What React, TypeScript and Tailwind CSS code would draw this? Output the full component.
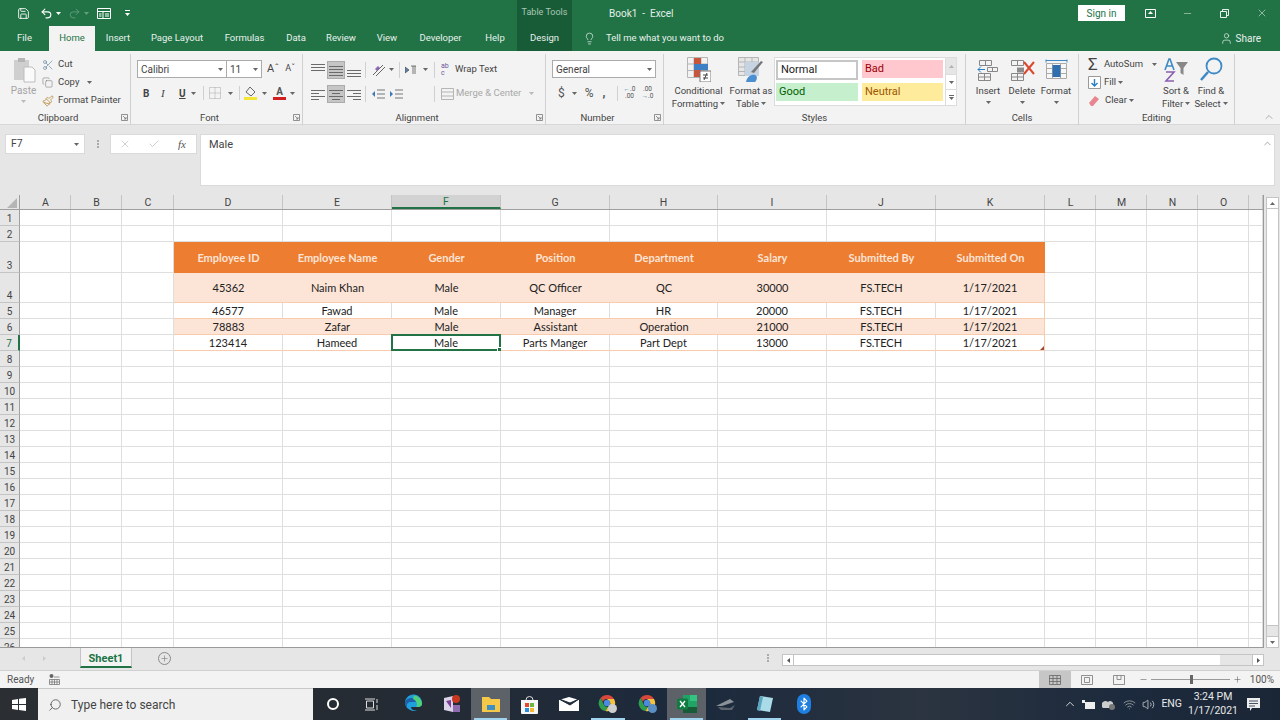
import React from "react";
import {
  Save, Undo2, Redo2, Scissors, Copy, Paintbrush, Lightbulb, User, Minus, X, Check, Search, ChevronUp, Plus, Volume2, Wifi, Bluetooth,
} from "lucide-react";

const COLS = ["A", "B", "C", "D", "E", "F", "G", "H", "I", "J", "K", "L", "M", "N", "O", ""];

const TABS = [
  { label: "File", w: "w-[49px]" },
  { label: "Home", w: "w-[46px]" },
  { label: "Insert", w: "w-[46px]" },
  { label: "Page Layout", w: "w-[72px]" },
  { label: "Formulas", w: "w-[63px]" },
  { label: "Data", w: "w-[40px]" },
  { label: "Review", w: "w-[50px]" },
  { label: "View", w: "w-[42px]" },
  { label: "Developer", w: "w-[65px]" },
  { label: "Help", w: "w-[44px]" },
  { label: "Design", w: "w-[55px]" },
];

const TABLE: Record<number, string[]> = {
  3: ["Employee ID", "Employee Name", "Gender", "Position", "Department", "Salary", "Submitted By", "Submitted On"],
  4: ["45362", "Naim Khan", "Male", "QC Officer", "QC", "30000", "FS.TECH", "1/17/2021"],
  5: ["46577", "Fawad", "Male", "Manager", "HR", "20000", "FS.TECH", "1/17/2021"],
  6: ["78883", "Zafar", "Male", "Assistant", "Operation", "21000", "FS.TECH", "1/17/2021"],
  7: ["123414", "Hameed", "Male", "Parts Manger", "Part Dept", "13000", "FS.TECH", "1/17/2021"],
};

const rowHeight = (r: number) => (r === 3 ? "h-[31px]" : r === 4 ? "h-[30px]" : "h-[16px]");

const colWidth = (i: number) =>
  i < 2 ? "w-[51px]" : i === 2 ? "w-[52px]" : i === 7 ? "w-[108px]" : i < 11 ? "w-[109px]" : i < 15 ? "w-[51px]" : "w-[14px]";

const Caret = ({ className = "" }: { className?: string }) => (
  <svg width="5" height="3" viewBox="0 0 5 3" className={className}>
    <path d="M0 0h5L2.5 3z" fill="#666" />
  </svg>
);

const Lines = ({ kind }: { kind: "top" | "mid" | "bot" | "left" | "center" | "right" }) => {
  const y = kind === "top" ? [2, 5, 8] : kind === "bot" ? [8, 11, 14] : [4, 7, 10, 13];
  const short = (i: number) => (i % 2 === 1 ? 8 : 14);
  return (
    <svg width="16" height="16" viewBox="0 0 16 16">
      {y.map((v, i) => {
        const w = kind === "center" || kind === "left" || kind === "right" ? short(i) : 14;
        const x = kind === "left" ? 1 : kind === "right" ? 15 - w : 8 - w / 2;
        return <rect key={v} x={x} y={v} width={w} height="1" fill="#6a6a6a" />;
      })}
    </svg>
  );
};

const Group = ({ label, w, launcher = true, children }: { label: string; w: string; launcher?: boolean; children: React.ReactNode }) => (
  <div className={`${w} shrink-0 flex flex-col h-[71px] border-r border-[#d0d0d0]`}>
    <div className="flex-1 flex min-h-0">{children}</div>
    <div className={`h-[15px] pt-[2px] relative flex items-center justify-center text-[9.5px] text-[#444] ${launcher ? "pr-[14px]" : ""}`}>
      {label}
      {launcher && (
        <svg width="7" height="7" viewBox="0 0 7 7" className="absolute right-[2px] top-[4px]">
          <path d="M.5 .5h6v6h-6zM2 2l3 3M5 3v2H3" fill="none" stroke="#777" strokeWidth=".8" />
        </svg>
      )}
    </div>
  </div>
);

const TitleBar = () => (
  <div className="h-[26px] flex items-center text-white">
    <div className="w-[517px] flex items-center pl-[17px] shrink-0">
      <Save size={13} strokeWidth={1.6} />
      <Undo2 size={13} strokeWidth={2} className="ml-[10px]" />
      <Caret className="ml-[3px] [&>path]:fill-white" />
      <Redo2 size={13} strokeWidth={1.6} className="ml-[7px] opacity-30" />
      <Caret className="ml-[3px] opacity-30 [&>path]:fill-white" />
      <svg width="14" height="11" viewBox="0 0 14 11" className="ml-[8px]">
        <path d="M.5 .5h13v10H.5zM.5 3.5h13M6 3.5v7M2 6h2.500M2 8h2.500M8 6h4M8 8h4" fill="none" stroke="#fff" />
      </svg>
      <svg width="5" height="6" viewBox="0 0 5 6" className="ml-[14px]">
        <path d="M0 0h5v1H0zM0 3h5L2.500 6z" fill="#fff" />
      </svg>
    </div>
    <div className="w-[55px] h-full bg-[#185c37] flex items-center justify-center text-[9px] text-[#a9c7b6] shrink-0">Table Tools</div>
    <div className="ml-[37px] text-[10px] text-[#e4efe9] whitespace-pre">Book1  -  Excel</div>
    <div className="ml-auto flex items-center h-full">
      <div className="w-[47px] h-[16px] bg-white text-[#217346] text-[10px] flex items-center justify-center">Sign in</div>
      <svg width="11" height="9" viewBox="0 0 11 9" className="ml-[20px]">
        <path d="M.5 .5h10v8H.5z" fill="none" stroke="#fff" />
        <path d="M5.500 2l2.500 3H3z" fill="#fff" />
      </svg>
      <Minus size={11} strokeWidth={1} className="ml-[26px]" />
      <svg width="9" height="9" viewBox="0 0 9 9" className="ml-[27px]">
        <path d="M.5 2.500h6v6h-6zM2.500 2.500v-2h6v6h-2" fill="none" stroke="#fff" strokeWidth=".9" />
      </svg>
      <X size={12} strokeWidth={1} className="ml-[27px] mr-[12px]" />
    </div>
  </div>
);

const TabRow = () => (
  <div className="h-[25px] flex items-stretch text-[9.5px] text-[#e8f1ec]">
    {TABS.map((t) => (
      <div
        key={t.label}
        className={`${t.w} shrink-0 flex items-center justify-center ${t.label === "Home" ? "bg-[#f3f3f3] text-[#217346]" : ""} ${t.label === "Design" ? "bg-[#185c37]" : ""}`}
      >
        {t.label}
      </div>
    ))}
    <div className="flex items-center ml-[11px]">
      <Lightbulb size={13} strokeWidth={1.3} />
      <span className="ml-[10px]">Tell me what you want to do</span>
    </div>
    <div className="ml-auto flex items-center mr-[19px]">
      <User size={13} strokeWidth={1.3} />
      <span className="ml-[3px] text-[10px]">Share</span>
    </div>
  </div>
);

const ClipboardGroup = () => (
  <Group label="Clipboard" w="w-[131px]">
    <div className="w-[42px] pl-[5px] flex flex-col items-center pt-[3px] text-[#a5a5a5] text-[10px]">
      <svg width="24" height="26" viewBox="0 0 24 26">
        <path d="M2 3h15v20H2z" fill="#cfcfcf" />
        <path d="M6 1h7v4H6z" fill="#b5b5b5" />
        <path d="M12 10h8l3 3v12H12z" fill="#fafafa" stroke="#bdbdbd" />
      </svg>
      <span>Paste</span>
      <Caret className="mt-[2px] opacity-40" />
    </div>
    <div className="flex flex-col pt-[3px] text-[9.5px] text-[#444] gap-[3px]">
      <div className="h-[15px] flex items-center"><Scissors size={12} strokeWidth={1.2} className="text-[#5a7a96]" /><span className="ml-[4px]">Cut</span></div>
      <div className="h-[15px] flex items-center"><Copy size={11} strokeWidth={1.2} className="text-[#777]" /><span className="ml-[5px]">Copy</span><Caret className="ml-[8px]" /></div>
      <div className="h-[15px] flex items-center"><Paintbrush size={12} strokeWidth={1.6} className="text-[#b58a3c]" /><span className="ml-[4px]">Format Painter</span></div>
    </div>
  </Group>
);

const FontGroup = () => (
  <Group label="Font" w="w-[172px]">
    <div className="flex flex-col pl-[6px] pt-[6px]">
      <div className="h-[18px] flex items-center">
        <div className="w-[90px] h-full bg-white border border-[#ababab] flex items-center justify-between px-[3px] text-[10px] text-[#444]">Calibri<Caret /></div>
        <div className="w-[35px] h-full bg-white border border-l-0 border-[#ababab] flex items-center justify-between px-[3px] text-[10px] text-[#444]">11<Caret /></div>
        <span className="ml-[5px] text-[11px] text-[#444]">Aˆ</span>
        <span className="ml-[6px] text-[9px] text-[#444]">Aˇ</span>
      </div>
      <div className="h-[18px] mt-[6px] flex items-center text-[10px] text-[#444]">
        <span className="ml-[6px] w-[18px] font-bold">B</span>
        <span className="w-[18px] italic font-['Liberation_Serif',serif] text-[11px]">I</span>
        <span className="w-[12px] underline font-bold">U</span>
        <Caret />
        <div className="w-px h-[14px] bg-[#d0d0d0] ml-[7px]" />
        <svg width="12" height="12" viewBox="0 0 12 12" className="ml-[5px]">
          <path d="M.5 .5h11v11H.5zM6 .5v11M.5 6h11" fill="none" stroke="#a8a8a8" strokeDasharray="1 1" />
        </svg>
        <Caret className="ml-[7px]" />
        <div className="w-px h-[14px] bg-[#d0d0d0] ml-[6px]" />
        <svg width="14" height="14" viewBox="0 0 14 14" className="ml-[4px]">
          <path d="M6 1l5 5-4 4-5-4z" fill="none" stroke="#666" />
          <path d="M0 11h13v3H0z" fill="#f3e635" />
        </svg>
        <Caret className="ml-[4px]" />
        <div className="ml-[6px] flex flex-col items-center w-[13px] leading-[11px] font-bold text-[#555]">A<div className="w-[13px] h-[3px] bg-[#d31f1f]" /></div>
        <Caret className="ml-[4px]" />
      </div>
    </div>
  </Group>
);

const AlignmentGroup = () => (
  <Group label="Alignment" w="w-[243px]">
    <div className="flex flex-col pl-[6px] pt-[5px] text-[9.5px]">
      <div className="h-[21px] flex items-center">
        <div className="w-[18px] flex justify-center"><Lines kind="top" /></div>
        <div className="w-[18px] h-[18px] bg-[#c6c6c6] border border-[#ababab] flex items-center justify-center"><Lines kind="mid" /></div>
        <div className="w-[18px] flex justify-center"><Lines kind="bot" /></div>
        <div className="w-px h-[16px] bg-[#d0d0d0] ml-[2px]" />
        <svg width="14" height="14" viewBox="0 0 14 14" className="ml-[6px]">
          <path d="M1 12L11 2M4 13l9-9" stroke="#666" fill="none" />
          <path d="M3 6l3-3 2 2-3 3z" fill="#8a6bb0" />
        </svg>
        <Caret className="ml-[3px]" />
        <div className="w-px h-[16px] bg-[#d0d0d0] ml-[5px]" />
        <svg width="12" height="10" viewBox="0 0 12 10" className="ml-[5px]">
          <path d="M0 2l4 3-4 3zM6 1h5M8 1v8M10 1v8" fill="#5a7fb0" stroke="#555" strokeWidth=".8" />
        </svg>
        <Caret className="ml-[6px]" />
        <div className="w-px h-[16px] bg-[#d0d0d0] ml-[6px]" />
        <div className="ml-[6px] flex items-center text-[#444]">
          <span className="text-[7px] leading-[7px] w-[10px] text-[#6a5aa0]">ab c</span>
          <span className="ml-[4px]">Wrap Text</span>
        </div>
      </div>
      <div className="h-[21px] mt-[3px] flex items-center">
        <div className="w-[18px] flex justify-center"><Lines kind="left" /></div>
        <div className="w-[18px] h-[18px] bg-[#c6c6c6] border border-[#ababab] flex items-center justify-center"><Lines kind="center" /></div>
        <div className="w-[18px] flex justify-center"><Lines kind="right" /></div>
        <div className="w-px h-[16px] bg-[#d0d0d0] ml-[2px]" />
        <svg width="13" height="10" viewBox="0 0 13 10" className="ml-[6px]">
          <path d="M5 1h8M5 5h8M5 9h8" stroke="#777" />
          <path d="M0 5l3-3v6z" fill="#3d78b8" />
        </svg>
        <svg width="13" height="10" viewBox="0 0 13 10" className="ml-[5px]">
          <path d="M5 1h8M5 5h8M5 9h8" stroke="#777" />
          <path d="M3 5L0 2v6z" fill="#3d78b8" />
        </svg>
        <div className="w-px h-[16px] bg-[#d0d0d0] ml-[31px]" />
        <div className="ml-[6px] flex items-center text-[#a8a8a8]">
          <svg width="13" height="12" viewBox="0 0 13 12">
            <path d="M.5 .5h12v11H.5zM.5 4h12M.5 8h12" fill="none" stroke="#b5b5b5" />
          </svg>
          <span className="ml-[2px]">Merge &amp; Center</span>
          <Caret className="ml-[8px] opacity-40" />
        </div>
      </div>
    </div>
  </Group>
);

const NumberGroup = () => (
  <Group label="Number" w="w-[118px]">
    <div className="flex flex-col pl-[6px] pt-[6px]">
      <div className="w-[104px] h-[18px] bg-white border border-[#ababab] flex items-center justify-between px-[3px] text-[10px] text-[#444]">General<Caret /></div>
      <div className="h-[18px] mt-[6px] flex items-center text-[12px] text-[#555]">
        <span className="ml-[6px]">$</span>
        <Caret className="ml-[7px]" />
        <span className="ml-[8px]">%</span>
        <span className="ml-[9px] font-bold">,</span>
        <div className="w-px h-[15px] bg-[#d0d0d0] ml-[11px]" />
        <span className="ml-[5px] text-[6.5px] leading-[7px] w-[14px] text-center"><span className="text-[#3d78b8]">←</span>.0<br />.00</span>
        <span className="ml-[4px] text-[6.5px] leading-[7px] w-[14px] text-center">.00<br /><span className="text-[#3d78b8]">→</span>.0</span>
      </div>
    </div>
  </Group>
);

const StyleCell = ({ children, className }: { children: string; className: string }) => (
  <div className={`flex items-center pl-[3px] text-[11px] ${className}`}>{children}</div>
);

const StylesGroup = () => (
  <Group label="Styles" w="w-[302px]" launcher={false}>
    <div className="w-[66px] flex flex-col items-center pt-[3px] text-[9.5px] leading-[13px] text-[#444] pl-[3px]">
      <svg width="24" height="25" viewBox="0 0 24 25">
        <path d="M.5 .5h20v20H.5zM.5 7h20M.5 13.500h20M7 .5v20M14 .5v20" fill="none" stroke="#b5b5b5" />
        <path d="M7 1h7v6H7z" fill="#c9553b" />
        <path d="M7 7h14v6H7z" fill="#3f7fc4" />
        <path d="M7 13h7v7H7z" fill="#c9553b" />
        <path d="M13 14h11v11H13z" fill="#fff" stroke="#777" />
        <path d="M16 18h5M16 21h5M20 16l-3 7" stroke="#444" />
      </svg>
      <span className="mt-[2px] whitespace-nowrap">Conditional</span>
      <span className="whitespace-nowrap flex items-center">Formatting<Caret className="ml-[2px]" /></span>
    </div>
    <div className="w-[42px] flex flex-col items-center pt-[3px] text-[9.5px] leading-[13px] text-[#444]">
      <svg width="26" height="25" viewBox="0 0 26 25">
        <path d="M.5 .5h20v18H.5zM.5 5h20M.5 10h20M.5 14.500h20M7 .5v18M14 .5v18" fill="#e6e6e6" stroke="#b5b5b5" />
        <path d="M7 5h14v14H7z" fill="#c5d3e3" />
        <path d="M25 5l-9 11-3-1 10-11z" fill="#777" />
        <path d="M8 25c1-6 6-8 9-7s2 5 0 7z" fill="#4a8fd0" />
      </svg>
      <span className="mt-[2px] whitespace-nowrap">Format as</span>
      <span className="whitespace-nowrap flex items-center">Table<Caret className="ml-[2px]" /></span>
    </div>
    <div className="ml-[2px] mt-[3px] h-[49px] flex bg-white border border-[#dcdcdc]">
      <div className="w-[170px] grid grid-cols-[82px_81px] gap-x-[4px] gap-y-[3px] pl-[1px] pt-[2px] content-start">
        <StyleCell className="h-[20px] bg-white border-2 border-[#c6c6c6] text-[#222]">Normal</StyleCell>
        <StyleCell className="h-[18px] bg-[#ffc7ce] text-[#9c0006]">Bad</StyleCell>
        <StyleCell className="h-[18px] bg-[#c6efce] text-[#006100]">Good</StyleCell>
        <StyleCell className="h-[18px] bg-[#ffeb9c] text-[#9c5700]">Neutral</StyleCell>
      </div>
      <div className="w-[11px] flex flex-col border-l border-[#dcdcdc] ml-auto">
        <div className="h-[16px] bg-[#e6e6e6] flex items-center justify-center"><Caret className="rotate-180 opacity-40" /></div>
        <div className="h-[16px] border-y border-[#dcdcdc] flex items-center justify-center"><Caret /></div>
        <div className="h-[15px] flex flex-col items-center justify-center gap-[1px]"><div className="w-[5px] h-px bg-[#666]" /><Caret /></div>
      </div>
    </div>
  </Group>
);

const CellButton = ({ label, children }: { label: string; children: React.ReactNode }) => (
  <div className="w-[34px] flex flex-col items-center text-[9.5px] text-[#444]">
    <div className="h-[27px] mt-[3px] flex items-center">{children}</div>
    <span className="leading-[13px]">{label}</span>
    <Caret className="mt-[4px]" />
  </div>
);

const CellsGroup = () => (
  <Group label="Cells" w="w-[113px]" launcher={false}>
    <div className="flex pl-[5px]">
      <CellButton label="Insert">
        <svg width="22" height="23" viewBox="0 0 22 23">
          <path d="M2.500 1.500h12v5h-12zM8.500 1.500v5M1.500 14.500h12v7h-12zM1.500 18h12M7.500 14.500v7M10.500 8.500h10v4h-10zM15.500 8.500v4" fill="none" stroke="#888" />
          <path d="M1 10.500h7M1 10.500l3-3M1 10.500l3 3" stroke="#2a7fc4" fill="none" />
        </svg>
      </CellButton>
      <CellButton label="Delete">
        <svg width="25" height="23" viewBox="0 0 25 23">
          <path d="M1.500 1.500h12v5h-12zM7.500 1.500v5M1.500 14.500h12v7h-12zM1.500 18h12M7.500 14.500v7" fill="none" stroke="#888" />
          <path d="M7 8.500h7v5H7z" fill="#8c8c8c" />
          <path d="M14 3l10 12M24 3L14 15" stroke="#d9492f" strokeWidth="2" />
        </svg>
      </CellButton>
      <CellButton label="Format">
        <svg width="23" height="24" viewBox="0 0 23 24">
          <path d="M1.500 4.500h20v15h-20zM1.500 9.500h20M1.500 14.500h20M7.500 4.500v15M15.500 4.500v15" fill="#f7f7f7" stroke="#aaa" />
          <path d="M7.500 6h8v12h-8z" fill="#2f6fb0" />
          <path d="M1 1.500h21M1 .5v3M22 .5v3" stroke="#3f8ac4" fill="none" />
        </svg>
      </CellButton>
    </div>
  </Group>
);

const EditingGroup = () => (
  <Group label="Editing" w="w-[156px]" launcher={false}>
    <div className="flex flex-col pl-[9px] pt-[3px] gap-[3px] text-[9.5px] text-[#444] w-[78px] shrink-0">
      <div className="h-[15px] flex items-center"><span className="text-[17px] leading-[15px] w-[15px] text-[#444]">Σ</span><span className="ml-[1px]">AutoSum</span><Caret className="ml-[9px]" /></div>
      <div className="h-[15px] flex items-center">
        <svg width="13" height="13" viewBox="0 0 13 13">
          <path d="M.5 .5h12v12H.5z" fill="#fff" stroke="#999" />
          <path d="M6.500 3v7M3.500 7l3 3 3-3" fill="none" stroke="#2a7fc4" strokeWidth="1.400" />
        </svg>
        <span className="ml-[3px]">Fill</span><Caret className="ml-[2px]" />
      </div>
      <div className="h-[15px] flex items-center">
        <svg width="12" height="11" viewBox="0 0 12 11"><path d="M1 8l6-7 4 3-6 7H3z" fill="#e8868f" /></svg>
        <span className="ml-[5px]">Clear</span><Caret className="ml-[2px]" />
      </div>
    </div>
    <div className="w-[38px] shrink-0 flex flex-col items-center pt-[3px] text-[9.5px] leading-[13px] text-[#444]">
      <svg width="26" height="26" viewBox="0 0 26 26">
        <path d="M13 5h12l-4.500 6v7l-3-2v-5z" fill="#888" />
        <path d="M2 13L6 2h1l4 11M4 9h6" fill="none" stroke="#3f8ac4" strokeWidth="1.600" />
        <path d="M3 15h8L3 24h8" fill="none" stroke="#8a5fb0" strokeWidth="1.600" />
      </svg>
      <span className="mt-[1px] whitespace-nowrap">Sort &amp;</span>
      <span className="whitespace-nowrap flex items-center">Filter<Caret className="ml-[2px]" /></span>
    </div>
    <div className="w-[32px] shrink-0 flex flex-col items-center pt-[3px] text-[9.5px] leading-[13px] text-[#444]">
      <svg width="24" height="26" viewBox="0 0 24 26">
        <circle cx="15" cy="9" r="7.500" fill="none" stroke="#3f8ac4" strokeWidth="1.800" />
        <path d="M9 15l-7 8" stroke="#3f8ac4" strokeWidth="2.500" />
      </svg>
      <span className="mt-[1px] whitespace-nowrap">Find &amp;</span>
      <span className="whitespace-nowrap flex items-center">Select<Caret className="ml-[2px]" /></span>
    </div>
  </Group>
);

const Ribbon = () => (
  <div className="h-[74px] bg-[#f3f3f3] flex pt-[3px] relative border-b border-[#d8d8d8]">
    <ClipboardGroup />
    <FontGroup />
    <AlignmentGroup />
    <NumberGroup />
    <StylesGroup />
    <CellsGroup />
    <EditingGroup />
    <ChevronUp size={12} strokeWidth={1} className="absolute right-[5px] bottom-[1px] text-[#666]" />
  </div>
);

const FormulaBar = () => (
  <div className="h-[70px] bg-[#e6e6e6] flex items-start pt-[9px] pl-[5px] text-[10.5px] text-[#444]">
    <div className="w-[80px] h-[20px] bg-white border border-[#dadada] flex items-center justify-between px-[5px]">F7<Caret /></div>
    <div className="w-[25px] h-[20px] flex flex-col items-center justify-center gap-[1px]">
      <div className="w-[2px] h-[2px] bg-[#aaa]" />
      <div className="w-[2px] h-[2px] bg-[#aaa]" />
      <div className="w-[2px] h-[2px] bg-[#aaa]" />
    </div>
    <div className="w-[87px] h-[20px] bg-white border border-[#dadada] flex items-center text-[#bbb]">
      <X size={12} strokeWidth={1.4} className="ml-[8px]" />
      <Check size={12} strokeWidth={1.4} className="ml-[17px]" />
      <span className="ml-[18px] text-[11px] italic font-['Liberation_Serif',serif] text-[#555]">fx</span>
    </div>
    <div className="ml-[3px] w-[1075px] h-[52px] bg-white border border-[#dadada] pl-[8px] pt-[2px] text-[11px] relative">
      Male
      <ChevronUp size={11} strokeWidth={1.2} className="absolute right-[1px] top-[3px] text-[#666]" />
    </div>
  </div>
);

const rows = Array.from({ length: 26 }, (_, i) => i + 1);

const Sheet = () => (
  <div className="h-[453px] flex bg-[#e6e6e6]">
    <div className="w-[1264px] shrink-0 overflow-hidden border-b border-[#9a9a9a] border-r font-['Lato',sans-serif]">
      <div className="h-[15px] flex pl-0 border-b border-[#9f9f9f] text-[10.5px] leading-[12px] text-[#444] font-['Roboto',sans-serif]">
        <div className="w-[20px] shrink-0 relative border-r border-[#9f9f9f]">
          <svg width="10" height="10" viewBox="0 0 10 10" className="absolute right-[2px] bottom-[1px]"><path d="M10 0v10H0z" fill="#b5b5b5" /></svg>
        </div>
        {COLS.map((c, i) => (
          <div
            key={c + i}
            className={`${colWidth(i)} shrink-0 flex items-center justify-center pt-[2px] border-r border-[#c4c4c4] ${i < 3 || i > 10 ? "pl-[1px]" : ""} ${c === "F" ? "bg-[#d2d2d2] border-b-2 border-b-[#217346] text-[#217346]" : ""}`}
          >
            {c}
          </div>
        ))}
      </div>
      {rows.map((r) => {
        const data = TABLE[r];
        return (
          <div key={r} className={`${rowHeight(r)} flex`}>
            <div className={`w-[20px] shrink-0 bg-[#e6e6e6] border-b border-[#c4c4c4] flex items-end justify-center text-[10px] leading-[13px] text-[#444] font-['Roboto',sans-serif] ${r === 7 ? "border-r-2 border-r-[#217346] bg-[#d2d2d2] text-[#217346]" : "border-r border-r-[#9f9f9f]"}`}>{r}</div>
            {COLS.map((c, i) => {
              const tableCell = data && i >= 3 && i <= 10;
              const header = r === 3 && tableCell;
              const band = (r === 4 || r === 6) && tableCell;
              const selected = r === 7 && c === "F";
              const lastCol = tableCell && !header && c === "K";
              return (
                <div
                  key={c + i}
                  className={`${colWidth(i)} shrink-0 relative flex items-center justify-center whitespace-nowrap ${tableCell ? "pt-[2px]" : ""} ${
                    header
                      ? "bg-[#ed7d31] text-[#fce4d6] font-bold text-[11px]"
                      : band
                        ? "bg-[#fce4d6] border-b border-b-[#f8cbad] text-[#222] text-[11px]"
                        : tableCell
                          ? "bg-white border-b border-b-[#f8cbad] border-r border-r-[#dedede] text-[#222] text-[11px]"
                          : "bg-white border-b border-r border-[#dedede]"
                  } ${lastCol ? "border-r border-r-[#f8cbad]" : ""}`}
                >
                  {tableCell ? data[i - 3] : ""}
                  {selected && (
                    <div className="absolute -left-px -top-px w-[110px] h-[17px] border-2 border-[#217346]">
                      <div className="absolute -right-[3px] -bottom-[3px] w-[5px] h-[5px] bg-[#217346] border border-white" />
                    </div>
                  )}
                  {r === 7 && c === "K" && (
                    <svg width="4" height="4" viewBox="0 0 4 4" className="absolute right-0 bottom-0"><path d="M4 0v4H0z" fill="#9c4a3a" /></svg>
                  )}
                </div>
              );
            })}
          </div>
        );
      })}
    </div>
    <div className="flex-1 flex flex-col items-center pt-[2px] pl-[1px]">
      <div className="w-[13px] flex-1 flex flex-col bg-[#e6e6e6] border border-[#c4c4c4]">
        <div className="h-[11px] bg-white border-b border-[#c4c4c4] flex items-center justify-center"><Caret className="rotate-180" /></div>
        <div className="h-[417px] bg-white border-b border-[#c4c4c4]" />
        <div className="flex-1" />
        <div className="h-[11px] bg-white border-t border-[#c4c4c4] flex items-center justify-center"><Caret /></div>
      </div>
    </div>
  </div>
);

const SheetTabs = () => (
  <div className="h-[23px] bg-[#e6e6e6] border-b border-[#d0d0d0] flex items-start text-[#444]">
    <div className="w-[80px] h-[20px] flex items-center pl-[22px] gap-[18px] shrink-0">
      <svg width="3" height="5" viewBox="0 0 3 5"><path d="M3 0v5L0 2.500z" fill="#ccc" /></svg>
      <svg width="3" height="5" viewBox="0 0 3 5"><path d="M0 0v5l3-2.500z" fill="#ccc" /></svg>
    </div>
    <div className="w-[52px] h-[20px] pt-[3px] bg-[#f3f3f3] border-x border-b-2 border-x-[#c4c4c4] border-b-[#217346] text-[#217346] text-[11px] leading-[14px] font-bold flex items-center justify-center shrink-0">Sheet1</div>
    <div className="ml-[26px] mt-[4px] w-[13px] h-[13px] rounded-full border border-[#8a8a8a] flex items-center justify-center shrink-0">
      <Plus size={9} strokeWidth={1.6} className="text-[#777]" />
    </div>
    <div className="ml-[596px] mt-[6px] flex flex-col gap-[1px] shrink-0">
      <div className="w-[2px] h-[2px] bg-[#aaa]" />
      <div className="w-[2px] h-[2px] bg-[#aaa]" />
      <div className="w-[2px] h-[2px] bg-[#aaa]" />
    </div>
    <div className="ml-[13px] mt-[6px] h-[12px] w-[482px] flex border border-[#c4c4c4] shrink-0 bg-[#e6e6e6]">
      <div className="w-[11px] bg-white border-r border-[#c4c4c4] flex items-center justify-center"><svg width="3" height="5" viewBox="0 0 3 5"><path d="M3 0v5L0 2.500z" fill="#555" /></svg></div>
      <div className="w-[426px] bg-white" />
      <div className="flex-1" />
      <div className="w-[11px] bg-white border-l border-[#c4c4c4] flex items-center justify-center"><svg width="3" height="5" viewBox="0 0 3 5"><path d="M0 0v5l3-2.500z" fill="#555" /></svg></div>
    </div>
  </div>
);

const StatusBar = () => (
  <div className="h-[17px] bg-[#f3f3f3] flex items-center text-[10px] text-[#555]">
    <span className="ml-[7px]">Ready</span>
    <svg width="11" height="11" viewBox="0 0 11 11" className="ml-[15px]">
      <circle cx="2.500" cy="2" r="2" fill="#666" />
      <path d="M.5 5.500h10v5H.5zM5 3h5.500M3 5.500v5M5.500 5.500v5M8 5.500v5M.5 8h10" fill="none" stroke="#777" strokeWidth=".8" />
    </svg>
    <div className="ml-auto flex items-center h-full">
      <div className="w-[32px] h-full bg-[#c6c6c6] flex items-center justify-center">
        <svg width="12" height="10" viewBox="0 0 12 10"><path d="M.5 .5h11v9H.5zM4 .5v9M8 .5v9M.5 3.500h11M.5 6.500h11" fill="none" stroke="#666" strokeWidth=".8" /></svg>
      </div>
      <svg width="12" height="10" viewBox="0 0 12 10" className="ml-[10px]"><path d="M.5 .5h11v9H.5zM3.500 2.500h5v5h-5z" fill="none" stroke="#777" strokeWidth=".8" /></svg>
      <svg width="12" height="10" viewBox="0 0 12 10" className="ml-[20px]"><path d="M.5 .5h11v9H.5zM4 .5v4h4v-4" fill="none" stroke="#777" strokeWidth=".8" /></svg>
      <Minus size={9} strokeWidth={1.4} className="ml-[14px]" />
      <div className="ml-[3px] w-[79px] h-px bg-[#9a9a9a] relative">
        <div className="absolute left-[39px] -top-[4px] w-[3px] h-[9px] bg-[#666]" />
      </div>
      <Plus size={9} strokeWidth={1.4} className="ml-[3px]" />
      <span className="ml-[8px] mr-[6px]">100%</span>
    </div>
  </div>
);

const TaskIcon = ({ w = "w-[39px]", active, running, children }: { w?: string; active?: boolean; running?: boolean; children: React.ReactNode }) => (
  <div className={`${w} h-full shrink-0 flex items-center justify-center relative ${active ? "bg-[#5c6268]" : ""}`}>
    {children}
    {running && <div className="absolute bottom-0 left-[3px] right-[3px] h-[2px] bg-[#9fd3ee]" />}
  </div>
);

const Chrome = ({ badge }: { badge: string }) => (
  <svg width="20" height="20" viewBox="0 0 20 20">
    <path d="M9 1a8 8 0 0 1 7 4H9a4 4 0 0 0-4 3L2.500 4A8 8 0 0 1 9 1z" fill="#d9483b" />
    <path d="M2.500 4L6 11a4 4 0 0 0 4 2l-2.500 4A8 8 0 0 1 2.500 4z" fill="#2f9e50" />
    <path d="M16 5a8 8 0 0 1-8.500 12L10 13a4 4 0 0 0 2-5l-3-3z" fill="#f4c33d" />
    <circle cx="9" cy="9" r="3.200" fill="#4a8be0" />
    <circle cx="14.500" cy="14.500" r="4.500" fill={badge} />
  </svg>
);

const Taskbar = () => (
  <div className="h-[32px] flex items-stretch bg-[linear-gradient(90deg,#2a2f36_0%,#252b33_30%,#1c2a3d_55%,#2b3440_72%,#1c2a3d_88%,#1b2635_100%)] text-white">
    <div className="w-[38px] flex items-center justify-center bg-[#2b2e33]">
      <svg width="14" height="13" viewBox="0 0 14 13"><path d="M0 2l6-1v5H0zM7 .8L14 0v6H7zM0 7h6v5l-6-1zM7 7h7v6l-7-1z" fill="#fff" /></svg>
    </div>
    <div className="w-[275px] bg-[#f0f0f0] flex items-center text-[#444] text-[12px] border-t border-[#c8c8c8]">
      <Search size={14} strokeWidth={1.3} className="ml-[10px] -scale-x-100" />
      <span className="ml-[9px]">Type here to search</span>
    </div>
    <div className="w-[40px] flex items-center justify-center"><div className="w-[12px] h-[12px] rounded-full border-2 border-white" /></div>
    <div className="w-[40px] pr-[4px] flex items-center justify-center">
      <svg width="14" height="13" viewBox="0 0 14 13"><path d="M2.500 3h7v7h-7zM1 1h10M1 12h10M13 1v4M13 7v5" fill="none" stroke="#ddd" /></svg>
    </div>
    <TaskIcon>
      <svg width="20" height="20" viewBox="0 0 20 20">
        <path d="M2 8a8.500 8.500 0 0 1 17 2c0 2-2 3-4 3H8c0 2 2 4 6 3.500A9 9 0 0 1 2 8z" fill="#1fa0dc" />
        <path d="M2 8c1-3 4-4 6-4 3 0 5 2 5 4H8c-3 0-5 2-4 6a9 9 0 0 1-2-6z" fill="#1d5fa8" />
        <path d="M11 1.500A8.500 8.500 0 0 1 19 10c0 2-2 3-4 3h-2c2-2 1-6-3-8z" fill="#4fd07a" />
      </svg>
    </TaskIcon>
    <TaskIcon>
      <svg width="18" height="18" viewBox="0 0 18 18">
        <path d="M1 3l9-2v16l-9-2z" fill="#ddd3e8" />
        <path d="M3 6l5 7V5z" fill="#7b3f98" />
        <circle cx="13" cy="4" r="4" fill="#c7381f" />
        <path d="M10 10h7v7h-7z" fill="#8f6bb0" />
      </svg>
    </TaskIcon>
    <TaskIcon active running>
      <svg width="18" height="15" viewBox="0 0 18 15">
        <path d="M0 0h7l2 2h9v13H0z" fill="#f5c84a" />
        <path d="M5 8h8v5H5z" fill="#3d8fc4" />
      </svg>
    </TaskIcon>
    <TaskIcon>
      <svg width="19" height="19" viewBox="0 0 19 19">
        <path d="M6 5a3.500 3.500 0 0 1 7 0" fill="none" stroke="#ddd" />
        <path d="M1 5h17v13a1 1 0 0 1-1 1H2a1 1 0 0 1-1-1z" fill="#f5f5f5" />
        <path d="M5 8h4v4H5z" fill="#e2492f" /><path d="M10 8h4v4h-4z" fill="#6cb33f" />
        <path d="M5 13h4v4H5z" fill="#2a8fd8" /><path d="M10 13h4v4h-4z" fill="#f4b92f" />
      </svg>
    </TaskIcon>
    <TaskIcon>
      <svg width="20" height="14" viewBox="0 0 20 14">
        <path d="M0 3l10-3 10 3v11H0z" fill="#fff" />
        <path d="M0 2l11 6 9-6-9 4z" fill="#1e2a3a" stroke="#1e2a3a" />
      </svg>
    </TaskIcon>
    <TaskIcon w="w-[40px]" running><Chrome badge="#cfcfcf" /></TaskIcon>
    <TaskIcon><Chrome badge="#5a8fc4" /></TaskIcon>
    <TaskIcon active running>
      <svg width="20" height="18" viewBox="0 0 20 18">
        <path d="M6 0h14v18H6z" fill="#21a366" />
        <path d="M13 0h7v6h-7z" fill="#33c481" /><path d="M6 12h14v6H6z" fill="#185c37" />
        <rect x="0" y="3.500" width="11" height="11" rx="1.500" fill="#107c41" />
        <path d="M3 6l5 6M8 6l-5 6" stroke="#fff" strokeWidth="1.300" />
      </svg>
    </TaskIcon>
    <TaskIcon>
      <svg width="20" height="13" viewBox="0 0 20 13">
        <path d="M0 8l14-7 4 3L6 8z" fill="#8a9198" />
        <path d="M2 9l12 1 5-3-3 5H5z" fill="#5c656e" />
      </svg>
    </TaskIcon>
    <TaskIcon running>
      <svg width="18" height="18" viewBox="0 0 18 18">
        <path d="M4 1l13 2-3 14-13-2z" fill="#a9dbe8" />
        <path d="M4 1l3 1-3 14-3-1z" fill="#5ba7bf" />
      </svg>
    </TaskIcon>
    <TaskIcon>
      <div className="w-[14px] h-[20px] rounded-[7px] bg-[#1e7fe0] flex items-center justify-center">
        <Bluetooth size={14} strokeWidth={2} />
      </div>
    </TaskIcon>
    <div className="ml-auto flex items-center text-[#e8e8e8] text-[10px]">
      <ChevronUp size={14} strokeWidth={1.5} />
      <svg width="13" height="9" viewBox="0 0 13 9" className="ml-[5px]"><path d="M0 0h3v3H0zM3 2h10v7H3z" fill="#eee" /></svg>
      <svg width="13" height="11" viewBox="0 0 13 11" className="ml-[7px]"><path d="M0 8a4 4 0 0 1 6-5 3 3 0 0 1 5 3v3H1z" fill="#ccc" /><circle cx="10" cy="8" r="3" fill="#777" /></svg>
      <Wifi size={13} strokeWidth={1.3} className="ml-[8px] text-[#bbb]" />
      <Volume2 size={13} strokeWidth={1.3} className="ml-[6px]" />
      <span className="ml-[6px] text-[10.5px]">ENG</span>
      <div className="ml-[7px] w-[48px] flex flex-col items-center leading-[14px] text-[10.5px]">
        <span>3:24 PM</span>
        <span>1/17/2021</span>
      </div>
      <svg width="13" height="13" viewBox="0 0 13 13" className="ml-[10px] mr-[20px]">
        <path d="M0 0h13v10H5l-2 3v-3H0z" fill="#eee" />
        <path d="M2 3h9M2 5.500h9M2 8h6" stroke="#1c2a3d" strokeWidth=".8" />
      </svg>
    </div>
  </div>
);

export default function App() {
  return (
    <div className="w-[1280px] h-[720px] overflow-hidden flex flex-col font-['Roboto',sans-serif]">
      <div className="h-[51px] shrink-0 bg-[#217346]">
        <TitleBar />
        <TabRow />
      </div>
      <Ribbon />
      <FormulaBar />
      <Sheet />
      <SheetTabs />
      <StatusBar />
      <Taskbar />
    </div>
  );
}
